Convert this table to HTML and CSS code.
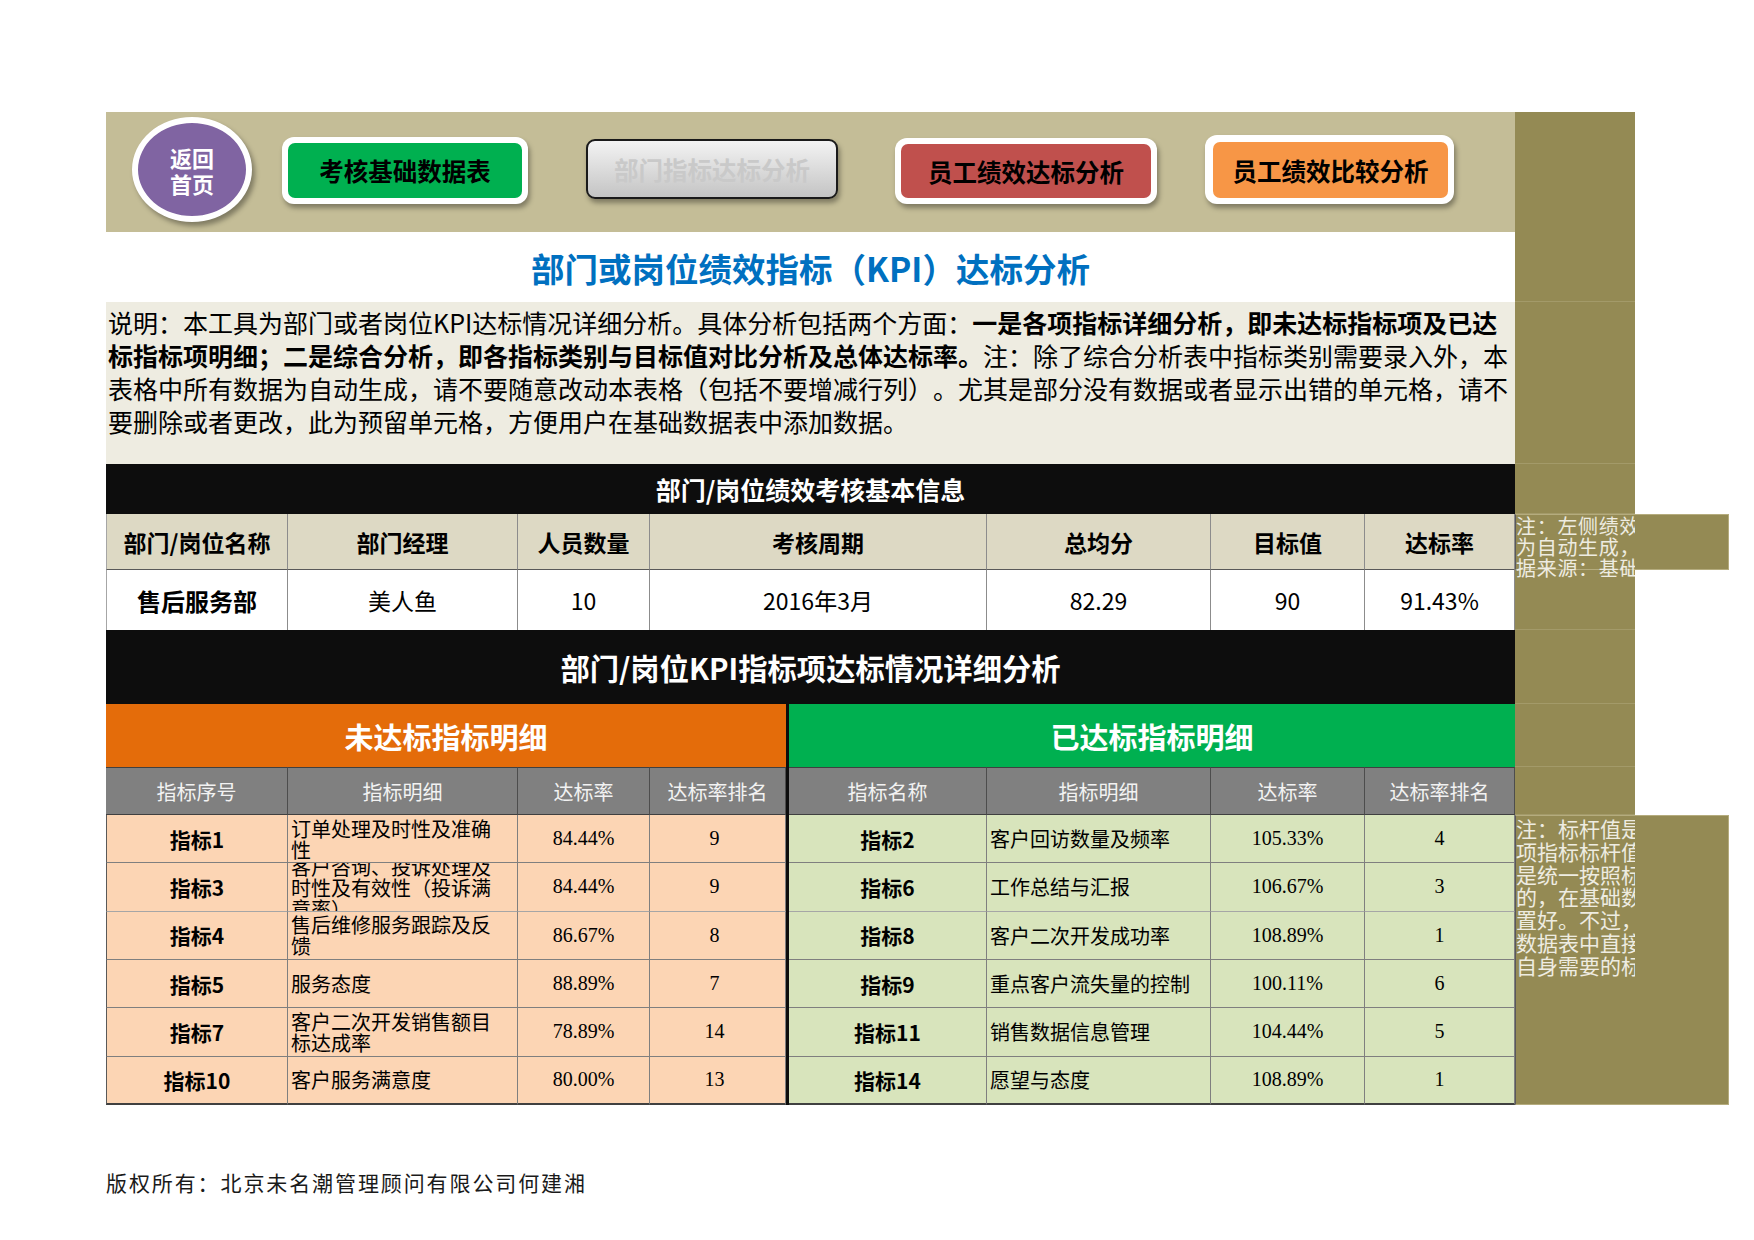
FILE: index.html
```html
<!DOCTYPE html>
<html lang="zh-CN">
<head>
<meta charset="utf-8">
<title>部门或岗位绩效指标（KPI）达标分析</title>
<link rel="stylesheet" href="styles.css">
</head>
<body>
<div class="page">
  <div class="sheet">
    <div class="main">
      <div class="topbar">
        <div class="home"><span>返回</span><span>首页</span></div>
        <div class="btn btn-white btn-green"><div class="face">考核基础数据表</div></div>
        <div class="btn btn-gray">部门指标达标分析</div>
        <div class="btn btn-white btn-red"><div class="face">员工绩效达标分析</div></div>
        <div class="btn btn-white btn-orange"><div class="face">员工绩效比较分析</div></div>
      </div>
      <div class="title">部门或岗位绩效指标（KPI）达标分析</div>
      <div class="desc">
        <div>说明：本工具为部门或者岗位KPI达标情况详细分析。具体分析包括两个方面：<b>一是各项指标详细分析，即未达标指标项及已达</b></div>
        <div><b>标指标项明细；二是综合分析，即各指标类别与目标值对比分析及总体达标率。</b>注：除了综合分析表中指标类别需要录入外，本</div>
        <div>表格中所有数据为自动生成，请不要随意改动本表格（包括不要增减行列）。尤其是部分没有数据或者显示出错的单元格，请不</div>
        <div>要删除或者更改，此为预留单元格，方便用户在基础数据表中添加数据。</div>
      </div>
      <div class="band band1">部门/岗位绩效考核基本信息</div>
      <div class="info">
        <div class="ih first">部门/岗位名称</div>
        <div class="ih">部门经理</div>
        <div class="ih">人员数量</div>
        <div class="ih">考核周期</div>
        <div class="ih">总均分</div>
        <div class="ih">目标值</div>
        <div class="ih">达标率</div>
        <div class="id first strong">售后服务部</div>
        <div class="id">美人鱼</div>
        <div class="id">10</div>
        <div class="id">2016年3月</div>
        <div class="id">82.29</div>
        <div class="id">90</div>
        <div class="id">91.43%</div>
      </div>
      <div class="band band2">部门/岗位KPI指标项达标情况详细分析</div>
      <div class="kpi">
        <div class="sep"></div>
        <div class="kh kh-orange">未达标指标明细</div>
        <div class="kh kh-green">已达标指标明细</div>

        <div class="gh first">指标序号</div>
        <div class="gh">指标明细</div>
        <div class="gh">达标率</div>
        <div class="gh">达标率排名</div>
        <div class="gh">指标名称</div>
        <div class="gh">指标明细</div>
        <div class="gh">达标率</div>
        <div class="gh">达标率排名</div>

        <div class="c l first name">指标1</div>
        <div class="c l txt">订单处理及时性及准确性</div>
        <div class="c l num">84.44%</div>
        <div class="c l num rank">9</div>
        <div class="c r name">指标2</div>
        <div class="c r txt">客户回访数量及频率</div>
        <div class="c r num">105.33%</div>
        <div class="c r num">4</div>

        <div class="c l first name">指标3</div>
        <div class="c l txt">客户咨询、投诉处理及时性及有效性（投诉满意率）</div>
        <div class="c l num">84.44%</div>
        <div class="c l num rank">9</div>
        <div class="c r name">指标6</div>
        <div class="c r txt">工作总结与汇报</div>
        <div class="c r num">106.67%</div>
        <div class="c r num">3</div>

        <div class="c l first name thick">指标4</div>
        <div class="c l txt thick">售后维修服务跟踪及反馈</div>
        <div class="c l num thick">86.67%</div>
        <div class="c l num rank thick">8</div>
        <div class="c r name thick">指标8</div>
        <div class="c r txt thick">客户二次开发成功率</div>
        <div class="c r num thick">108.89%</div>
        <div class="c r num thick">1</div>

        <div class="c l first name">指标5</div>
        <div class="c l txt">服务态度</div>
        <div class="c l num">88.89%</div>
        <div class="c l num rank">7</div>
        <div class="c r name">指标9</div>
        <div class="c r txt">重点客户流失量的控制</div>
        <div class="c r num">100.11%</div>
        <div class="c r num">6</div>

        <div class="c l first name">指标7</div>
        <div class="c l txt">客户二次开发销售额目标达成率</div>
        <div class="c l num">78.89%</div>
        <div class="c l num rank">14</div>
        <div class="c r name">指标11</div>
        <div class="c r txt">销售数据信息管理</div>
        <div class="c r num">104.44%</div>
        <div class="c r num">5</div>

        <div class="c l first name last">指标10</div>
        <div class="c l txt last">客户服务满意度</div>
        <div class="c l num last">80.00%</div>
        <div class="c l num rank last">13</div>
        <div class="c r name last">指标14</div>
        <div class="c r txt last">愿望与态度</div>
        <div class="c r num last">108.89%</div>
        <div class="c r num last">1</div>
      </div>
    </div>
    <div class="side">
      <div class="seg h120"></div>
      <div class="seg h70"></div>
      <div class="seg h162"></div>
      <div class="seg h50"></div>
      <div class="note note1">
        <div class="note-text">注：左侧绩效考核基本信息均<br>为自动生成，数<br>据来源：基础数据表</div>
      </div>
      <div class="seg h60"></div>
      <div class="seg h74"></div>
      <div class="seg h63"></div>
      <div class="seg h48"></div>
      <div class="note note2">
        <div class="note-text">注：标杆值是指各<br>项指标标杆值，标杆值<br>是统一按照标准设置<br>的，在基础数据表中设<br>置好。不过，也可以在基础<br>数据表中直接修改为<br>自身需要的标杆值</div>
      </div>
    </div>
  </div>
  <div class="footer">版权所有：北京未名潮管理顾问有限公司何建湘</div>
</div>
</body>
</html>
```

FILE: styles.css
```css
html, body {
  margin: 0;
  padding: 0;
  background: #ffffff;
}

body {
  font-family: "Noto Sans CJK SC", "Noto Sans", sans-serif;
  color: #000;
}

.page {
  padding: 112px 0 0 106px;
}

.sheet {
  display: flex;
  align-items: flex-start;
}

.main {
  width: 1409px;
  flex: none;
}

/* ---------- top button bar ---------- */
.topbar {
  height: 120px;
  background: #C4BD97;
  display: flex;
  align-items: flex-start;
}

.home {
  box-sizing: border-box;
  width: 120px;
  height: 105px;
  margin: 5px 0 0 26px;
  border-radius: 50%;
  background: #8064A2;
  border: 6px solid #ffffff;
  box-shadow: 3px 4px 5px rgba(0, 0, 0, 0.35);
  display: flex;
  flex-direction: column;
  align-items: center;
  justify-content: center;
  color: #ffffff;
  font-weight: 700;
  font-size: 22px;
  line-height: 26px;
}

.btn {
  box-sizing: border-box;
  display: flex;
  align-items: stretch;
  justify-content: center;
  font-weight: 700;
  font-size: 24.5px;
  color: #000;
  border-radius: 12px;
  box-shadow: 2px 4px 5px rgba(0, 0, 0, 0.35);
}

.btn-white {
  background: #ffffff;
  padding: 6px;
}

.btn-white .face {
  flex: 1;
  border-radius: 7px;
  display: flex;
  align-items: center;
  justify-content: center;
}

.btn-green {
  width: 246px;
  height: 67px;
  margin: 25px 0 0 30px;
}
.btn-green .face { background: #00B050; }

.btn-gray {
  width: 252px;
  height: 60px;
  margin: 27px 0 0 58px;
  align-items: center;
  border: 2px solid #1a1a1a;
  border-radius: 9px;
  background: linear-gradient(#f3f3f3, #c4c4c4);
  color: #c9c9c9;
}

.btn-red {
  width: 262px;
  height: 66px;
  margin: 26px 0 0 57px;
}
.btn-red .face { background: #C0504D; }

.btn-orange {
  width: 249px;
  height: 69px;
  margin: 23px 0 0 48px;
  padding: 7px 6px 6px 8px;
}
.btn-orange .face { background: #F79646; }

/* ---------- title & description ---------- */
.title {
  height: 70px;
  background: #ffffff;
  display: flex;
  align-items: center;
  justify-content: center;
  color: #0070C0;
  font-size: 33.5px;
  font-weight: 700;
}

.desc {
  box-sizing: border-box;
  height: 162px;
  background: #EEECE1;
  padding: 4px 0 0 2px;
  font-size: 25px;
  line-height: 33px;
  white-space: nowrap;
  text-spacing-trim: space-all;
}

.desc b { font-weight: 700; }

/* ---------- black bands ---------- */
.band {
  background: #0D0D0D;
  color: #ffffff;
  font-weight: 700;
  display: flex;
  align-items: center;
  justify-content: center;
}

.band1 { height: 50px; font-size: 25px; }
.band2 { height: 74px; font-size: 29.3px; }

/* ---------- basic info table ---------- */
.info {
  display: grid;
  grid-template-columns: 182px 230px 132px 337px 224px 154px 150px;
  grid-template-rows: 56px 60px;
}

.info > div {
  box-sizing: border-box;
  display: flex;
  align-items: center;
  justify-content: center;
  border-right: 1px solid #8c8c8c;
  font-size: 23px;
}

.info .ih {
  background: #DDD9C4;
  font-weight: 700;
  border-bottom: 1px solid #595959;
}

.info .id {
  background: #ffffff;
}

.info .first { border-left: 1px solid #a6a6a6; }
.info .strong { font-weight: 700; font-size: 24px; }

/* ---------- KPI tables ---------- */
.kpi {
  display: grid;
  grid-template-columns: 182px 230px 132px 136px 3px 198px 224px 154px 150px;
  grid-template-rows: 63px 48px repeat(6, 48.333px);
}

.sep {
  grid-column: 5;
  grid-row: 1 / -1;
  background: #0D0D0D;
}

.kh {
  display: flex;
  align-items: center;
  justify-content: center;
  color: #ffffff;
  font-weight: 700;
  font-size: 29px;
}

.kh-orange { grid-column: 1 / 5; grid-row: 1; background: #E46C0A; }
.kh-green { grid-column: 6 / 10; grid-row: 1; background: #00B050; }

.gh {
  box-sizing: border-box;
  background: #808080;
  color: #F2F2F2;
  font-size: 20px;
  display: flex;
  align-items: center;
  justify-content: center;
  border-top: 1px solid #404040;
  border-right: 1px solid #4d4d4d;
  border-bottom: 1px solid #404040;
}

.c {
  box-sizing: border-box;
  display: flex;
  align-items: center;
  justify-content: center;
  overflow: hidden;
  border-right: 1px solid #7f7f7f;
  border-bottom: 1px solid #7f7f7f;
}

.c.l { background: #FCD5B4; }
.c.r { background: #D8E4BC; }
.c.first { border-left: 1px solid #595959; }
.c.thick { border-top: 1px solid #a6a6a6; margin-top: -1px; }
.c.last { border-bottom: 2px solid #404040; }

.c.name {
  font-weight: 700;
  font-size: 21px;
}

.c.txt {
  justify-content: flex-start;
  padding: 0 10px 0 3px;
  font-size: 20px;
  line-height: 21px;
}

.c.num {
  font-family: "Liberation Serif", "Noto Sans CJK SC", serif;
  font-size: 20px;
}

.c.rank {
  padding-right: 6px;
}

/* ---------- right olive column ---------- */
.side {
  width: 120px;
  flex: none;
  background: #948A54;
  display: flex;
  flex-direction: column;
  align-items: flex-start;
}

.seg {
  box-sizing: border-box;
  width: 120px;
  border-bottom: 1px solid #A39A69;
}

.h120 { height: 120px; border-bottom: none; }
.h70 { height: 70px; }
.h162 { height: 162px; }
.h50 { height: 50px; }
.h60 { height: 60px; }
.h74 { height: 74px; }
.h63 { height: 63px; }
.h48 { height: 48px; }

.note {
  box-sizing: border-box;
  width: 214px;
  background: #948A54;
  border: 1px solid #B5AC7E;
  border-left-color: #595959;
  overflow: visible;
}

.note1 { height: 56px; }
.note2 { height: 290px; padding-top: 1px; }

.note-text {
  width: 119px;
  overflow: hidden;
  white-space: nowrap;
  color: #EEECE1;
  font-size: 20px;
  letter-spacing: 0.7px;
  line-height: 21px;
}

.note2 .note-text {
  line-height: 22.8px;
  font-size: 21px;
  letter-spacing: 0;
  height: 286px;
}

/* ---------- footer ---------- */
.footer {
  margin-top: 64px;
  font-size: 21px;
  letter-spacing: 1.9px;
  line-height: 26px;
  color: #1a1a1a;
}
```
